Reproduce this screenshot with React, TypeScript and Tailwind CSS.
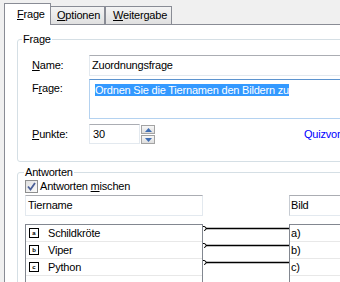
import React from "react";

function Spin({ up }: { up: boolean }) {
  return (
    <div className="h-[9px] w-[14px] border border-[#a3a3a3] bg-gradient-to-b from-[#f7f7f7] to-[#dedede] flex items-center justify-center">
      <svg width="7" height="4" viewBox="0 0 7 4">
        {up ? (
          <polygon points="3.5,0 7,4 0,4" fill="#3f6db3" />
        ) : (
          <polygon points="0,0 7,0 3.5,4" fill="#3f6db3" />
        )}
      </svg>
    </div>
  );
}

function LetterBox({ l }: { l: string }) {
  return (
    <div className="w-[10px] h-[10px] border border-black flex items-center justify-center text-[6px] leading-[6px] font-bold tracking-normal">
      {l}
    </div>
  );
}

export default function App() {
  const rows = [
    { l: "a", t: "Schildkröte", r: "a)" },
    { l: "b", t: "Viper", r: "b)" },
    { l: "c", t: "Python", r: "c)" },
  ];
  return (
    <div className="w-[340px] h-[282px] overflow-hidden bg-[#f0f0f0] text-[11px] leading-[13px] tracking-[-0.2px] text-black font-['Liberation_Sans',Arial,sans-serif] flex flex-col">
      {/* Tabs */}
      <div className="h-[24px] shrink-0 flex items-end pl-[4px]">
        <div className="relative z-10 -mb-px h-[22px] w-[47px] bg-white border border-b-0 border-[#898c95] pl-[12px] pt-[4px]">
          <span className="underline">F</span>rage
        </div>
        <div className="h-[18px] w-[54px] border border-l-0 border-b-0 border-[#898c95] bg-gradient-to-b from-[#f4f4f4] to-[#e0e0e0] pl-[6px] pt-[2px]">
          <span className="underline">O</span>ptionen
        </div>
        <div className="h-[18px] w-[67px] border border-b-0 border-[#898c95] bg-gradient-to-b from-[#f4f4f4] to-[#e0e0e0] pl-[7px] pt-[2px]">
          <span className="underline">W</span>eitergabe
        </div>
      </div>

      {/* Tab page */}
      <div className="flex-1 ml-[4px] border-t border-l border-[#898c95] bg-white flex flex-col">
        {/* Frage group */}
        <fieldset className="ml-[12px] mt-[8px] w-[400px] border border-[#d5dfe5] rounded-[3px] p-0">
          <legend className="ml-[4px] px-[1px]">Frage</legend>
          <div className="pl-[14px] pt-[9px] pb-[17px] flex flex-col">
            <div className="flex items-center">
              <div className="w-[57px]">
                <span className="underline">N</span>ame:
              </div>
              <div className="flex-1 h-[21px] border border-[#e3e9ef] border-t-[#abadb3] pl-[2px] flex items-center">
                Zuordnungsfrage
              </div>
            </div>
            <div className="flex items-start mt-[3px]">
              <div className="w-[57px] pt-[3px]">
                F<span className="underline">r</span>age:
              </div>
              <div className="flex-1 h-[40px] border border-[#b4d2f0] border-t-[#5d94cf] pl-[5px] pt-[4px]">
                <span className="bg-[#3399ff] text-white">Ordnen Sie die Tiernamen den Bildern zu</span>
              </div>
            </div>
            <div className="flex items-center mt-[5px]">
              <div className="w-[57px]">
                <span className="underline">P</span>unkte:
              </div>
              <div className="w-[51px] h-[20px] border border-[#e3e9ef] border-t-[#abadb3] pl-[3px] flex items-center">
                30
              </div>
              <div className="ml-[1px] h-[20px] flex flex-col gap-[1px] pt-[1px]">
                <Spin up />
                <Spin up={false} />
              </div>
              <div className="ml-[149px] text-[#0000ff] whitespace-nowrap">Quizvorschau</div>
            </div>
          </div>
        </fieldset>

        {/* Antworten group */}
        <fieldset className="ml-[12px] mt-[4px] w-[400px] h-[200px] border border-[#d5dfe5] rounded-[3px] p-0">
          <legend className="ml-[6px] px-[1px]">Antworten</legend>
          <div className="pl-[7px] pt-[1px] flex flex-col">
            <div className="flex items-center gap-[2px] h-[13px]">
              <div className="w-[13px] h-[13px] border border-[#8e8f8f] bg-gradient-to-br from-[#e0e0e0] to-[#fbfbfb] flex items-center justify-center">
                <svg width="9" height="9" viewBox="0 0 9 9">
                  <path d="M1 4.5 L3.5 7.5 L8 1" stroke="#4a5f97" strokeWidth="1.8" fill="none" />
                </svg>
              </div>
              <div>
                Antworten <span className="underline">m</span>ischen
              </div>
            </div>
            <div className="flex mt-[2px]">
              <div className="w-[178px] h-[21px] border border-[#e3e9ef] border-t-[#abadb3] pl-[2px] flex items-center">
                Tiername
              </div>
              <div className="ml-[86px] flex-1 h-[21px] border border-[#e3e9ef] border-t-[#abadb3] border-l-[#c7ccd3] pl-[1px] flex items-center">
                Bild
              </div>
            </div>
            <div className="flex mt-[8px]">
              <div className="w-[178px] h-[80px] border border-b-0 border-[#828790] flex flex-col">
                {rows.map((r) => (
                  <div key={r.l} className="h-[17px] border-b border-[#e8e8e8] flex items-center pl-[3px] gap-[9px]">
                    <LetterBox l={r.l} />
                    <span>{r.t}</span>
                  </div>
                ))}
              </div>
              <svg width="86" height="60" viewBox="0 0 86 60" className="shrink-0">
                {[4.5, 21.5, 38.5].map((y) => (
                  <g key={y}>
                    <path d={`M0 ${y - 2} H1 A2 2 0 0 1 1 ${y + 2}`} stroke="#000" strokeWidth="1" fill="none" />
                    <line x1="3" y1={y} x2="86" y2={y} stroke="#000" strokeWidth="1.3" />
                  </g>
                ))}
              </svg>
              <div className="flex-1 h-[80px] border border-b-0 border-r-0 border-[#828790] flex flex-col">
                {rows.map((r) => (
                  <div key={r.r} className="h-[17px] border-b border-[#e8e8e8] flex items-center pl-[1px]">
                    {r.r}
                  </div>
                ))}
              </div>
            </div>
          </div>
        </fieldset>
      </div>
    </div>
  );
}
